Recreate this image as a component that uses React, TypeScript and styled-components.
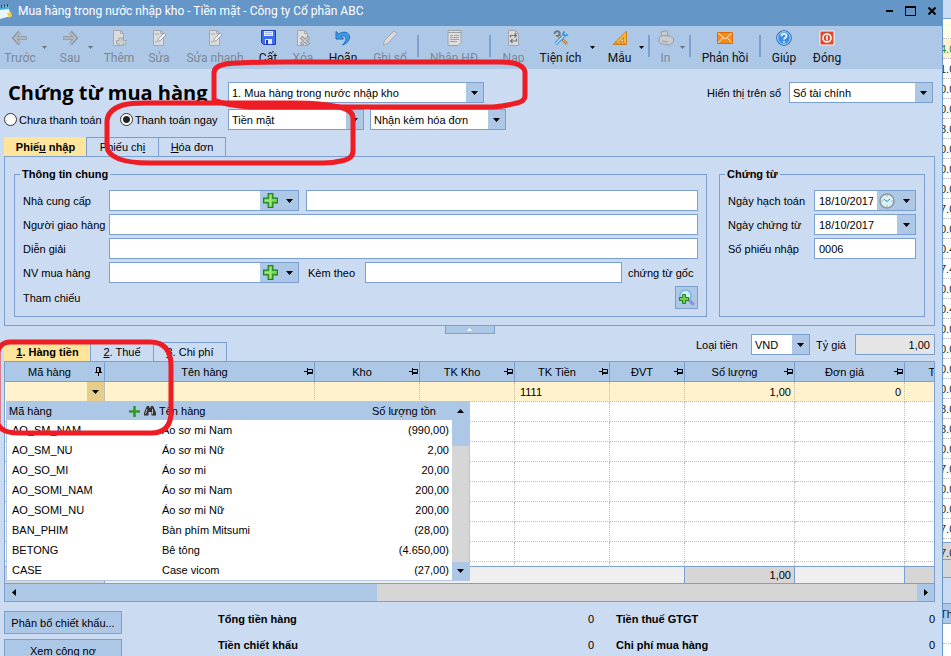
import React from "react";
import styled, { createGlobalStyle } from "styled-components";

const c = {
  title: "#6596c8",
  bar: "#adc7e7",
  body: "#cbdbf1",
  line: "#7ba0cf",
  tab: "#ffe59b",
  row: "#fff2cc",
  gray: "#d6d6d6",
  dots: "#bdbdbd",
  red: "#ee1c24",
};

const GlobalStyle = createGlobalStyle`
  *, *::before, *::after { box-sizing: border-box; }
  html, body { margin: 0; background: #fff; }
  body, button, input, select {
    font-family: "Liberation Sans", Arial, sans-serif;
    font-size: 11px;
    line-height: 14px;
    color: #000;
  }
  button { padding: 0; border: 0; background: none; cursor: pointer; }
  svg { display: block; flex: none; }
`;

const Desktop = styled.div`
  position: relative;
  display: flex;
  height: 100vh;
  overflow: hidden;
`;

const Window = styled.main`
  flex: 1;
  min-width: 0;
  background: ${c.body};
  border-right: 1px solid ${c.title};
  box-shadow: 0 0 4px #0006;
`;

/* ---------- title bar ---------- */

const TitleBar = styled.header`
  display: flex;
  align-items: center;
  height: 26px;
  padding: 0 0 5px;
  background: ${c.title};
`;

const WindowTitle = styled.span`
  flex: 1;
  margin-left: 6px;
  color: #fff;
  font: 12px/18px Roboto, sans-serif;
  white-space: nowrap;
`;

const CaptionButton = styled.button`
  display: grid;
  place-items: center;
  width: 21px;
  height: 20px;
`;

/* ---------- toolbar ---------- */

const Toolbar = styled.nav`
  display: flex;
  height: 43px;
  background: ${c.bar};
`;

const Tool = styled.button<{ $w: number }>`
  display: flex;
  flex-direction: column;
  align-items: center;
  gap: 4px;
  width: ${(p) => p.$w}px;
  padding-top: 4px;
  flex: none;
  font: 12px/16px Roboto, sans-serif;
  color: #111;
  white-space: nowrap;
  &:disabled { color: #7d8794; cursor: default; }
`;

const ToolMenu = styled.button<{ $w: number }>`
  display: flex;
  align-items: center;
  width: ${(p) => p.$w}px;
  padding-left: 2px;
  flex: none;
  color: #000;
  &:disabled { color: #6b7480; }
`;

const Separator = styled.span`
  width: 2px;
  height: 22px;
  margin: 9px 3px 0;
  flex: none;
  background: ${c.line};
`;

/* ---------- shared form parts ---------- */

const Body = styled.div`
  padding: 13px 7px 0 4px;
`;

const Box = styled.div<{ $w?: number }>`
  display: flex;
  height: 21px;
  border: 1px solid ${c.line};
  background: #fff;
  ${(p) => (p.$w ? `width: ${p.$w}px; flex: none;` : "flex: 1; min-width: 0;")}
`;

const TextInput = styled.input<{ $w?: number; $right?: boolean }>`
  height: 21px;
  padding: 0 4px;
  border: 1px solid ${c.line};
  border-radius: 0;
  outline: 0;
  background: #fff;
  text-align: ${(p) => (p.$right ? "right" : "left")};
  min-width: 0;
  ${(p) => (p.$w ? `width: ${p.$w}px; flex: none;` : "flex: 1;")}
  &:read-only { background: #e5e5e5; }
`;

const BoxInput = styled.input`
  flex: 1;
  min-width: 0;
  padding: 0 4px;
  border: 0;
  outline: 0;
  background: #fff;
`;

const BoxButton = styled.button<{ $w?: number }>`
  display: grid;
  place-items: center;
  width: ${(p) => p.$w ?? 18}px;
  flex: none;
  background: ${c.bar};
`;

const SelectFrame = styled.div<{ $w: number }>`
  display: grid;
  width: ${(p) => p.$w}px;
  height: 21px;
  flex: none;
  border: 1px solid ${c.line};
  background: #fff;
  > * { grid-area: 1 / 1; }
`;

const NativeSelect = styled.select`
  appearance: none;
  width: 100%;
  padding: 0 20px 0 3px;
  border: 0;
  border-radius: 0;
  outline: 0;
  background: transparent;
`;

const SelectArrow = styled.span`
  display: grid;
  place-items: center;
  justify-self: end;
  width: 17px;
  background: ${c.bar};
  pointer-events: none;
`;

const Heading = styled.h1`
  width: 220px;
  margin: 0;
  flex: none;
  font: bold 20px/21px "Open Sans", sans-serif;
  white-space: nowrap;
`;

const HeadRow = styled.div`
  display: flex;
  align-items: center;
  padding: 0 2px 0 4px;
`;

const PushLabel = styled.label`
  margin: 0 8px 0 auto;
  white-space: nowrap;
`;

const PayRow = styled.div`
  display: flex;
  align-items: center;
  margin-top: 6px;
`;

const RadioLabel = styled.label<{ $w: number }>`
  display: flex;
  align-items: center;
  gap: 2px;
  width: ${(p) => p.$w}px;
  flex: none;
  white-space: nowrap;
`;

const Radio = styled.input`
  appearance: none;
  width: 13px;
  height: 13px;
  margin: 0;
  border: 1px solid #333;
  border-radius: 50%;
  background: #fff;
  &:checked { background: radial-gradient(circle, #222 0 3px, #fff 4px); }
`;

const PaySelects = styled.div`
  display: flex;
  gap: 6px;
`;

/* ---------- tabs ---------- */

const Tabs = styled.div`
  display: flex;
`;

const Tab = styled.button<{ $w: number; $on?: boolean }>`
  width: ${(p) => p.$w}px;
  height: 19px;
  border: 1px solid ${(p) => (p.$on ? c.tab : c.line)};
  border-bottom: 0;
  background: ${(p) => (p.$on ? c.tab : "transparent")};
  font-weight: ${(p) => (p.$on ? "bold" : "normal")};
  white-space: nowrap;
  & + & { border-left-color: ${c.line}; }
  &:not(:last-child) { border-right: 0; }
`;

const TabRow = styled.div`
  margin-top: 7px;
`;

const Panel = styled.section`
  display: flex;
  gap: 12px;
  padding: 10px 9px 8px;
  border: 1px solid ${c.line};
`;

const Group = styled.fieldset<{ $w?: number }>`
  ${(p) => (p.$w ? `width: ${p.$w}px; flex: none;` : "flex: 1;")}
  min-width: 0;
  margin: 0;
  padding: 9px 8px 7px;
  border: 1px solid ${c.line};
`;

const Legend = styled.legend`
  margin-left: -3px;
  padding: 0 2px;
  font-weight: bold;
  line-height: 14px;
`;

const FieldRow = styled.div`
  display: flex;
  align-items: center;
  min-height: 21px;
  margin-bottom: 3px;
  &:last-child { margin-bottom: 0; }
`;

const FieldLabel = styled.label<{ $w?: number }>`
  width: ${(p) => p.$w ?? 86}px;
  flex: none;
  white-space: nowrap;
`;

const Gap = styled.span<{ $w: number }>`
  width: ${(p) => p.$w}px;
  flex: none;
`;

const LookupButton = styled.button`
  display: grid;
  place-items: center;
  width: 23px;
  height: 23px;
  margin-left: auto;
  border: 1px solid ${c.line};
  background: ${c.bar};
`;

const Collapse = styled.button`
  display: grid;
  place-items: center;
  width: 50px;
  height: 9px;
  margin: -1px auto 0;
  border: 1px solid ${c.line};
  background: ${c.bar};
`;

/* ---------- detail grid ---------- */

const DetailBar = styled.div`
  display: flex;
  align-items: flex-end;
  height: 27px;
`;

const Currency = styled.div`
  display: flex;
  align-items: center;
  align-self: flex-start;
  margin-left: auto;
`;

const CurrencyLabel = styled.label<{ $w: number }>`
  width: ${(p) => p.$w}px;
`;

const GridFrame = styled.section`
  position: relative;
  border: 1px solid ${c.line};
  background: #fff;
`;

const GridView = styled.div`
  overflow: hidden;
`;

const GridTable = styled.table`
  width: 100%;
  min-width: 1010px;
  table-layout: fixed;
  border-collapse: separate;
  border-spacing: 0;
`;

const GridHead = styled.th`
  height: 20px;
  padding: 0 1px 0 0;
  border-right: 1px solid ${c.line};
  border-bottom: 1px solid ${c.line};
  background: ${c.bar};
  font-weight: normal;
`;

const HeadFlex = styled.div`
  display: flex;
  align-items: center;
  > span { flex: 1; white-space: nowrap; }
`;

const GridCell = styled.td<{ $on?: boolean; $right?: boolean; $short?: boolean }>`
  height: ${(p) => (p.$short ? 4 : 20)}px;
  padding: ${(p) => (p.$on ? "0 3px 0 5px" : "0")};
  border-right: 1px dotted ${c.dots};
  border-bottom: ${(p) => (p.$short ? "0" : `1px dotted ${c.dots}`)};
  background: ${(p) => (p.$on ? c.row : "#fff")};
  text-align: ${(p) => (p.$right ? "right" : "left")};
`;

const EditCell = styled.td`
  height: 20px;
  padding: 0;
  border-right: 1px solid ${c.dots};
  background: ${c.row};
`;

const EditBox = styled.div`
  display: flex;
  height: 20px;
`;

const EditInput = styled.input`
  flex: 1;
  min-width: 0;
  border: 0;
  outline: 0;
  background: transparent;
`;

const EditArrow = styled.button`
  display: grid;
  place-items: center;
  width: 17px;
  background: #e5ce87;
`;

const SumCell = styled.td<{ $fill?: boolean }>`
  height: 17px;
  padding: 0 3px;
  border-top: 1px solid ${c.line};
  border-right: 1px solid ${(p) => (p.$fill ? c.line : "#efefef")};
  background: ${(p) => (p.$fill ? c.gray : "#efefef")};
  text-align: right;
  line-height: 14px;
  &:has(+ [data-total]) { border-right-color: ${c.line}; }
`;

const HScroll = styled.div`
  display: flex;
  height: 18px;
  border-top: 1px solid ${c.line};
  background: ${c.gray};
`;

const HThumb = styled.div`
  display: flex;
  width: 40%;
  margin-right: auto;
  background: ${c.bar};
`;

const HButton = styled.button`
  display: grid;
  place-items: center;
  width: 17px;
  background: ${c.bar};
`;

/* ---------- item list under the edited cell ---------- */

const Popup = styled.div`
  position: absolute;
  top: 39px;
  left: 1px;
  display: flex;
  width: 464px;
  border: 1px solid #b3c8e0;
  background: #fff;
`;

const ItemTable = styled.table`
  flex: 1;
  table-layout: fixed;
  border-collapse: collapse;
`;

const ItemHead = styled.th<{ $right?: boolean }>`
  height: 18px;
  padding: 0 16px 0 2px;
  background: ${c.bar};
  font-weight: normal;
  text-align: ${(p) => (p.$right ? "right" : "left")};
`;

const HeadTools = styled.div`
  display: flex;
  align-items: center;
  gap: 4px;
  margin-right: -15px;
  > span { flex: 1; }
`;

const ItemCell = styled.td<{ $right?: boolean }>`
  height: 20px;
  padding: 0 3px 0 5px;
  text-align: ${(p) => (p.$right ? "right" : "left")};
  white-space: nowrap;
`;

const VScroll = styled.div`
  display: flex;
  flex-direction: column;
  width: 17px;
  flex: none;
  background: ${c.gray};
`;

const VThumb = styled.div`
  height: 26px;
  background: ${c.bar};
`;

const VButton = styled.button`
  display: grid;
  place-items: center;
  height: 18px;
  background: ${c.bar};
  &:last-child { margin-top: auto; }
`;

/* ---------- totals ---------- */

const Footer = styled.footer`
  display: flex;
  gap: 96px;
`;

const Actions = styled.div`
  display: flex;
  flex-direction: column;
  gap: 5px;
  width: 118px;
  flex: none;
  padding-top: 9px;
`;

const ActionButton = styled.button`
  height: 23px;
  border: 1px solid ${c.line};
  background: ${c.bar};
  white-space: nowrap;
`;

const Totals = styled.dl`
  display: grid;
  flex: 1;
  grid-template-columns: 376fr 319fr;
  grid-auto-rows: 26px;
  column-gap: 22px;
  margin: 4px 0 0;
`;

const Total = styled.div`
  display: flex;
  align-items: center;
  justify-content: space-between;
  dt { font-weight: bold; }
  dd { margin: 0; }
`;

/* ---------- list window behind ---------- */

const Behind = styled.aside`
  width: 8px;
  flex: none;
  overflow: hidden;
  background: #fff;
`;

const BehindRow = styled.div<{ $h?: number; $bg?: string; $color?: string; $solid?: boolean }>`
  height: ${(p) => p.$h ?? 20}px;
  padding-top: 3px;
  border-bottom: 1px ${(p) => (p.$solid ? `solid ${c.line}` : `dotted ${c.dots}`)};
  background: ${(p) => p.$bg ?? "#fff"};
  color: ${(p) => p.$color ?? "#222"};
  text-indent: -3px;
  white-space: nowrap;
  overflow: hidden;
`;

/* ---------- red marks ---------- */

const Marks = styled.svg`
  position: absolute;
  top: 0;
  left: 0;
  pointer-events: none;
`;

/* ---------- glyphs ---------- */

const Down = ({ s = 7 }: { s?: number }) => (
  <svg width={s} height={s === 7 ? 4 : 3} viewBox="0 0 7 4" preserveAspectRatio="none">
    <path d="M0 0h7L3.5 4z" fill="currentColor" />
  </svg>
);
const Up = ({ fill = "#000", w = 7 }: { fill?: string; w?: number }) => (
  <svg width={w} height={w === 7 ? 4 : 3} viewBox="0 0 7 4" preserveAspectRatio="none">
    <path d="M0 4h7L3.5 0z" fill={fill} />
  </svg>
);
const Side = ({ right }: { right?: boolean }) => (
  <svg width="4" height="7" viewBox="0 0 4 7">
    <path d={right ? "M0 0v7l4-3.5z" : "M4 0v7L0 3.5z"} />
  </svg>
);
const Pin = ({ down }: { down?: boolean }) => (
  <svg width="9" height="9" viewBox="0 0 9 9" fill="none" stroke="#000">
    {down ? (
      <path d="M2.5 5V.5h3V5M6.500 .5v5M1 5.5h7M4.5 5.5V9" />
    ) : (
      <path d="M0 4.5h3M3.5 1v7M4 2.5h4.5v3H4M4 6.500h5" />
    )}
  </svg>
);
const Plus = () => (
  <svg width="15" height="15" viewBox="0 0 16 16">
    <path d="M5.5.5h5v5h5v5h-5v5h-5v-5h-5v-5h5z" fill="#62c83f" stroke="#1b8420" strokeWidth="1.300" />
    <path d="M7 2h2v5h5v1H9v6H7V9H2V7h5z" fill="#a5e57c" />
  </svg>
);
const SmallPlus = () => (
  <svg width="11" height="11" viewBox="0 0 11 11">
    <path d="M5.500 0v11M0 5.500h11" stroke="#2f9a24" strokeWidth="2.600" />
  </svg>
);
const Binoculars = () => (
  <svg width="12" height="10" viewBox="0 0 12 10" fill="#333">
    <path d="M3 0h2l.6 2h.8L7 0h2l1 2 2 5v2.500H7.500V6h-3v3.500H0V7l2-5z" />
    <path d="M3 3 1.500 8M8.500 3v5" stroke="#bbb" />
  </svg>
);
const Clock = () => (
  <svg width="16" height="16" viewBox="0 0 16 16">
    <circle cx="8" cy="8" r="7" fill="#d5f3f8" stroke="#8e979f" strokeWidth="1.6" />
    <path d="m4.5 6 3.5 2.5 3-2.5" fill="none" stroke="#4b7da8" />
    <path d="M7.5 2.5h1v1h-1zM7.5 12.5h1v1h-1zM2.5 7.5h1v1h-1zM12.5 7.5h1v1h-1z" fill="#e0433a" />
  </svg>
);
const SearchAdd = () => (
  <svg width="17" height="17" viewBox="0 0 17 17">
    <path d="m10.500 10.500 4.500 4.500" stroke="#8f8fdc" strokeWidth="3" strokeLinecap="round" />
    <circle cx="7.500" cy="6.500" r="5.500" fill="#d4effc" stroke="#7fb0dc" strokeWidth="1.500" />
    <path d="M4.500 5.500h3v3h3v3h-3v3h-3v-3h-3v-3h3z" fill="#73cf4b" stroke="#1b8420" />
  </svg>
);
const Logo = () => (
  <svg width="12" height="16" viewBox="0 0 12 16">
    <path d="M0 4 8 3l3 10-11 3z" fill="#eaf6ff" />
    <path d="m0 4 8-1 1 3-9 1z" fill="#4ab1e6" />
    <path d="m7 10 4-1 1 4-3 2z" fill="#f5cf3e" />
    <path d="M1.5 2v3M4.500 1.500v3M7.500 1v3" stroke="#3c4e66" />
  </svg>
);

const Sheet = ({ children }: { children?: React.ReactNode }) => (
  <svg width="16" height="16" viewBox="0 0 16 16" fill="none">
    <path d="M2.500 .5h7l3 3v12h-10z" fill="#dcdcdc" stroke="#a3a7ad" />
    <path d="M9.500 .5v3h3" stroke="#a3a7ad" />
    {children}
  </svg>
);

const glyphs: Record<string, React.ReactNode> = {
  back: (
    <svg width="16" height="16" viewBox="0 0 16 16" fill="none">
      <path d="M7.500 2 2 8l5.500 6M2.500 8H15" stroke="#8f959d" strokeWidth="3.600" />
      <path d="M7.500 2.500 2.500 8l5 5.500M3 8h11.500" stroke="#b9bec5" strokeWidth="1.500" />
    </svg>
  ),
  next: (
    <svg width="16" height="16" viewBox="0 0 16 16" fill="none">
      <path d="M8.500 2 14 8l-5.500 6M13.500 8H1" stroke="#8f959d" strokeWidth="3.600" />
      <path d="M8.500 2.500 13.500 8l-5 5.500M13 8H1.500" stroke="#b9bec5" strokeWidth="1.500" />
    </svg>
  ),
  add: (
    <Sheet>
      <path d="M8 8h4v2.500h3V14h-3v1.500H8V14H5.500v-3.500H8z" fill="#cfcfcf" stroke="#a3a7ad" />
    </Sheet>
  ),
  edit: (
    <Sheet>
      <path d="M4 4h4M4 12h2" stroke="#a3a7ad" />
      <path d="m6.500 11.500 1-3 5.500-5.500 2 2-5.500 5.500z" fill="#eee" stroke="#9da2a8" />
    </Sheet>
  ),
  save: (
    <svg width="15" height="16" viewBox="0 0 15 16">
      <path d="M.5.500h14v14h-12l-2-2z" fill="#3f6df0" stroke="#1f3fc4" />
      <path d="M3 1h9v5H3z" fill="#e8f0ff" />
      <path d="M4 9h7v5H4z" fill="#dfe6f4" />
      <path d="M5 10h2v4H5z" fill="#1f3fc4" />
      <path d="M4 2.500h7M4 4.500h7" stroke="#9db4ee" />
    </svg>
  ),
  remove: (
    <Sheet>
      <path d="m6 7 8 7.500m0-7.500-8 7.500" stroke="#92979d" strokeWidth="3.400" />
      <path d="m6.500 7.500 7 6.500m0-6.500-7 6.500" stroke="#d2d2d2" strokeWidth="1.200" />
    </Sheet>
  ),
  undo: (
    <svg width="16" height="16" viewBox="0 0 16 16">
      <path d="M1 1.500v7.500h7.500L6 6.500c3-1.500 5 0 5 2.500 0 2-1.500 4-3.500 6 4.500-1.500 7-4.500 7-8C14.500 2.500 9 .5 3.800 4z" fill="#3f9be6" stroke="#1c6cc0" />
    </svg>
  ),
  pen: (
    <svg width="16" height="16" viewBox="0 0 16 16">
      <path d="m1 15 1.500-4.500L12 1l3 2.500-9.500 10z" fill="#d9dbde" stroke="#a3a7ad" />
    </svg>
  ),
  invoice: (
    <svg width="15" height="16" viewBox="0 0 15 16" fill="none">
      <path d="M1 .5h13v12l-3 3H1z" fill="#dedede" stroke="#9da2a8" />
      <path d="M1 2.500h13M3 5.500h3M7 5.500h5M3 7.500h9M3 9.500h9M3 11.500h7" stroke="#9da2a8" />
    </svg>
  ),
  reload: (
    <Sheet>
      <path d="M4.500 7.500V5.500h5.500M8.500 3.500l2 2-2 2M10.500 8.500v2.500H5M6.500 9l-2 2 2 2" stroke="#6e747b" strokeWidth="1.200" />
    </Sheet>
  ),
  utility: (
    <svg width="16" height="16" viewBox="0 0 16 16" fill="none">
      <path d="m5 5 9 9" stroke="#b97d3b" strokeWidth="3" />
      <path d="m5 5 9 9" stroke="#f0c078" />
      <path d="M1.500 4c0-3 4-3.500 5-1.500S5 6.500 3 5.500" stroke="#6c7379" strokeWidth="1.800" />
      <path d="m2.500 14 8-8" stroke="#3f94d6" strokeWidth="3.400" />
      <path d="m2.500 14 8-8" stroke="#c5e6fa" strokeWidth="1.200" />
      <path d="M11.500 1.500 10 4l2 2 3-1.500" stroke="#3f94d6" strokeWidth="1.800" />
    </svg>
  ),
  template: (
    <svg width="16" height="16" viewBox="0 0 16 16">
      <path d="M14.500 1v13.500H1z" fill="#f7b73c" stroke="#d07f1c" />
      <path d="M11.500 7.500v4h-4z" fill="#e8f0fa" stroke="#d07f1c" />
      <path d="M4 12v2M6 12.500v2M9 12.500v2M12 12.500v2" stroke="#b76a10" />
    </svg>
  ),
  print: (
    <svg width="16" height="16" viewBox="0 0 16 16" fill="#c9cbce" stroke="#989da4">
      <path d="m3 2 6-1.500 1 5-6 1z" />
      <path d="M1 7.500 4 5.500l8 .5 3.500 2v4l-4 3-9-1.500-1.500-2z" />
      <path d="m4 11 6 1" />
    </svg>
  ),
  mail: (
    <svg width="16" height="16" viewBox="0 0 16 16" fill="none">
      <path d="M.5 2.500h15v11H.5z" fill="#f58a1f" stroke="#d76a0c" />
      <path d="m1 3 7 6 7-6M1 13l5-5.500M15 13l-5-5.500" stroke="#fff1d8" />
    </svg>
  ),
  help: (
    <svg width="16" height="16" viewBox="0 0 16 16" fill="none">
      <circle cx="8" cy="8" r="7.300" fill="#3c8fe4" stroke="#2166b4" />
      <circle cx="8" cy="8" r="6.300" stroke="#b8dbfa" />
      <path d="M5.500 6.200C5.500 3 10.500 3 10.500 6c0 1.800-2.500 1.800-2.500 3.500M8 11v1.600" stroke="#fff" strokeWidth="1.700" />
    </svg>
  ),
  close: (
    <svg width="16" height="16" viewBox="0 0 16 16" fill="none">
      <path d="M1 1h14v14H1z" fill="#dd4a2e" stroke="#f3f3f3" />
      <circle cx="8" cy="8" r="4" stroke="#fff" strokeWidth="1.600" />
      <path d="M8 5.500v5" stroke="#fff" strokeWidth="1.600" />
    </svg>
  ),
};

type ToolSpec = { icon?: string; label?: string; w: number; off?: boolean; menu?: boolean; sep?: boolean };
const tools: ToolSpec[] = [
  { icon: "back", label: "Trước", w: 40, off: true },
  { menu: true, w: 14, off: true },
  { icon: "next", label: "Sau", w: 32, off: true },
  { menu: true, w: 14, off: true },
  { icon: "add", label: "Thêm", w: 38, off: true },
  { icon: "edit", label: "Sửa", w: 42, off: true },
  { icon: "edit", label: "Sửa nhanh", w: 70, off: true },
  { icon: "save", label: "Cất", w: 36 },
  { icon: "remove", label: "Xóa", w: 34, off: true },
  { icon: "undo", label: "Hoãn", w: 46 },
  { icon: "pen", label: "Ghi sổ", w: 48, off: true },
  { sep: true, w: 8 },
  { icon: "invoice", label: "Nhận HĐ", w: 64, off: true },
  { sep: true, w: 8 },
  { icon: "reload", label: "Nạp", w: 39, off: true },
  { icon: "utility", label: "Tiện ích", w: 55 },
  { menu: true, w: 14 },
  { icon: "template", label: "Mẫu", w: 35 },
  { menu: true, w: 8 },
  { sep: true, w: 8 },
  { icon: "print", label: "In", w: 25, off: true },
  { menu: true, w: 8, off: true },
  { sep: true, w: 8 },
  { icon: "mail", label: "Phản hồi", w: 62 },
  { sep: true, w: 8 },
  { icon: "help", label: "Giúp", w: 40 },
  { icon: "close", label: "Đóng", w: 46 },
];

const columns = [
  { name: "Mã hàng", w: 100 },
  { name: "Tên hàng", w: 210 },
  { name: "Kho", w: 105 },
  { name: "TK Kho", w: 95 },
  { name: "TK Tiền", w: 95 },
  { name: "ĐVT", w: 75 },
  { name: "Số lượng", w: 110 },
  { name: "Đơn giá", w: 110 },
  { name: "Thành tiền", w: 110 },
];

const items = [
  ["AO_SM_NAM", "Áo sơ mi Nam", "(990,00)"],
  ["AO_SM_NU", "Áo sơ mi Nữ", "2,00"],
  ["AO_SO_MI", "Áo sơ mi", "20,00"],
  ["AO_SOMI_NAM", "Áo sơ mi Nam", "200,00"],
  ["AO_SOMI_NU", "Áo sơ mi Nữ", "200,00"],
  ["BAN_PHIM", "Bàn phím Mitsumi", "(28,00)"],
  ["BETONG", "Bê tông", "(4.650,00)"],
  ["CASE", "Case vicom", "(27,00)"],
];

const totals = ["Tổng tiền hàng", "Tiền thuế GTGT", "Tiền chiết khấu", "Chi phí mua hàng"];

const amounts = "1.0 0.0 0.0 8.0 0.0 0.0 0.0 7.0 0.0 0.4 7.4 0.0 0.4 0.0 0.0 0.0 0.0 8.0 8.0 0.0 7.0 0.0 0.0 7.0".split(" ");

function Select({ id, w, label, options }: { id: string; w: number; label?: string; options: string[] }) {
  return (
    <SelectFrame $w={w}>
      <NativeSelect id={id} aria-label={label}>
        {options.map((o) => (
          <option key={o}>{o}</option>
        ))}
      </NativeSelect>
      <SelectArrow>
        <Down />
      </SelectArrow>
    </SelectFrame>
  );
}

function LookupBox({ id }: { id: string }) {
  return (
    <Box $w={190}>
      <BoxInput id={id} />
      <BoxButton $w={20} aria-label="Thêm mới">
        <Plus />
      </BoxButton>
      <BoxButton aria-label="Mở danh sách">
        <Down />
      </BoxButton>
    </Box>
  );
}

function ItemList() {
  return (
    <Popup>
      <ItemTable>
        <colgroup>
          <col width="150" />
          <col width="150" />
          <col width="145" />
        </colgroup>
        <thead>
          <tr>
            <ItemHead>
              <HeadTools>
                <span>Mã hàng</span>
                <button aria-label="Thêm hàng">
                  <SmallPlus />
                </button>
                <button aria-label="Tìm hàng">
                  <Binoculars />
                </button>
              </HeadTools>
            </ItemHead>
            <ItemHead>Tên hàng</ItemHead>
            <ItemHead $right>Số lượng tồn</ItemHead>
          </tr>
        </thead>
        <tbody>
          {items.map(([code, name, qty]) => (
            <tr key={code}>
              <ItemCell>{code}</ItemCell>
              <ItemCell>{name}</ItemCell>
              <ItemCell $right>{qty}</ItemCell>
            </tr>
          ))}
        </tbody>
      </ItemTable>
      <VScroll>
        <VButton aria-label="Lên">
          <Up />
        </VButton>
        <VThumb />
        <VButton aria-label="Xuống">
          <Down />
        </VButton>
      </VScroll>
    </Popup>
  );
}

function Grid() {
  return (
    <GridFrame>
      <GridView>
        <GridTable>
          <colgroup>
            {columns.map((col) => (
              <col key={col.name} width={col.w} />
            ))}
          </colgroup>
          <thead>
            <tr>
              {columns.map((col, i) => (
                <GridHead key={col.name}>
                  <HeadFlex>
                    <span>{col.name}</span>
                    <Pin down={i === 0} />
                  </HeadFlex>
                </GridHead>
              ))}
            </tr>
          </thead>
          <tbody>
            <tr>
              <EditCell>
                <EditBox>
                  <EditInput aria-label="Mã hàng" />
                  <EditArrow aria-label="Chọn mã hàng">
                    <Down />
                  </EditArrow>
                </EditBox>
              </EditCell>
              <GridCell $on />
              <GridCell $on />
              <GridCell $on />
              <GridCell $on>1111</GridCell>
              <GridCell $on />
              <GridCell $on $right>1,00</GridCell>
              <GridCell $on $right>0</GridCell>
              <GridCell $on />
            </tr>
            {Array.from({ length: 9 }, (_, r) => (
              <tr key={r}>
                {columns.map((col) => (
                  <GridCell key={col.name} $short={r === 8} />
                ))}
              </tr>
            ))}
          </tbody>
          <tfoot>
            <tr>
              <SumCell $fill />
              <SumCell />
              <SumCell />
              <SumCell />
              <SumCell />
              <SumCell />
              <SumCell $fill data-total>1,00</SumCell>
              <SumCell />
              <SumCell $fill data-total />
            </tr>
          </tfoot>
        </GridTable>
      </GridView>
      <HScroll>
        <HThumb>
          <HButton aria-label="Sang trái">
            <Side />
          </HButton>
        </HThumb>
        <HButton aria-label="Sang phải">
          <Side right />
        </HButton>
      </HScroll>
      <ItemList />
    </GridFrame>
  );
}

export default function App() {
  return (
    <Desktop>
      <GlobalStyle />
      <Window>
        <TitleBar>
          <Logo />
          <WindowTitle>Mua hàng trong nước nhập kho - Tiền mặt - Công ty Cổ phần ABC</WindowTitle>
          <CaptionButton aria-label="Thu nhỏ">
            <svg width="7" height="2"><path d="M0 0h7v2H0z" /></svg>
          </CaptionButton>
          <CaptionButton aria-label="Phóng to">
            <svg width="11" height="10" fill="none" stroke="#000"><path d="M.5 1.500h10v8H.5zM0 .5h11M0 1.500h11" /></svg>
          </CaptionButton>
          <CaptionButton aria-label="Đóng cửa sổ">
            <svg width="8" height="8" stroke="#000" strokeWidth="2"><path d="m.5.500 7 7m0-7-7 7" /></svg>
          </CaptionButton>
        </TitleBar>

        <Toolbar>
          {tools.map((t, i) =>
            t.sep ? (
              <Separator key={i} />
            ) : t.menu ? (
              <ToolMenu key={i} $w={t.w} disabled={t.off} aria-label="Thêm lựa chọn">
                <Down s={5} />
              </ToolMenu>
            ) : (
              <Tool key={i} $w={t.w} disabled={t.off}>
                {glyphs[t.icon!]}
                {t.label}
              </Tool>
            )
          )}
        </Toolbar>

        <Body>
          <HeadRow>
            <Heading>Chứng từ mua hàng</Heading>
            <Select id="kind" w={256} label="Loại chứng từ" options={["1. Mua hàng trong nước nhập kho"]} />
            <PushLabel htmlFor="book">Hiển thị trên sổ</PushLabel>
            <Select id="book" w={144} options={["Sổ tài chính"]} />
          </HeadRow>
          <PayRow>
            <RadioLabel $w={116}>
              <Radio type="radio" name="pay" />
              Chưa thanh toán
            </RadioLabel>
            <RadioLabel $w={108}>
              <Radio type="radio" name="pay" defaultChecked />
              Thanh toán ngay
            </RadioLabel>
            <PaySelects>
              <Select id="method" w={136} label="Hình thức" options={["Tiền mặt"]} />
              <Select id="bill" w={136} label="Hóa đơn" options={["Nhận kèm hóa đơn"]} />
            </PaySelects>
          </PayRow>

          <TabRow>
            <Tabs role="tablist">
              <Tab role="tab" aria-selected $w={82} $on>Phiế<u>u</u> nhập</Tab>
              <Tab role="tab" $w={72}>Phiếu ch<u>i</u></Tab>
              <Tab role="tab" $w={68}><u>H</u>óa đơn</Tab>
            </Tabs>
          </TabRow>
          <Panel>
            <Group>
              <Legend>Thông tin chung</Legend>
              <FieldRow>
                <FieldLabel htmlFor="supplier">Nhà cung cấp</FieldLabel>
                <LookupBox id="supplier" />
                <Gap $w={7} />
                <TextInput aria-label="Tên nhà cung cấp" />
              </FieldRow>
              <FieldRow>
                <FieldLabel htmlFor="carrier">Người giao hàng</FieldLabel>
                <TextInput id="carrier" />
              </FieldRow>
              <FieldRow>
                <FieldLabel htmlFor="note">Diễn giải</FieldLabel>
                <TextInput id="note" />
              </FieldRow>
              <FieldRow>
                <FieldLabel htmlFor="buyer">NV mua hàng</FieldLabel>
                <LookupBox id="buyer" />
                <Gap $w={9} />
                <FieldLabel $w={57} htmlFor="attached">Kèm theo</FieldLabel>
                <TextInput id="attached" />
                <Gap $w={6} />
                <FieldLabel as="span" $w={70}>chứng từ gốc</FieldLabel>
              </FieldRow>
              <FieldRow>
                <span>Tham chiếu</span>
                <LookupButton aria-label="Chọn tham chiếu">
                  <SearchAdd />
                </LookupButton>
              </FieldRow>
            </Group>
            <Group $w={206}>
              <Legend>Chứng từ</Legend>
              <FieldRow>
                <FieldLabel htmlFor="posted">Ngày hạch toán</FieldLabel>
                <Box>
                  <BoxInput id="posted" defaultValue="18/10/2017" />
                  <BoxButton $w={20} aria-label="Chọn giờ">
                    <Clock />
                  </BoxButton>
                  <BoxButton aria-label="Chọn ngày">
                    <Down />
                  </BoxButton>
                </Box>
              </FieldRow>
              <FieldRow>
                <FieldLabel htmlFor="dated">Ngày chứng từ</FieldLabel>
                <Box>
                  <BoxInput id="dated" defaultValue="18/10/2017" />
                  <BoxButton aria-label="Chọn ngày">
                    <Down />
                  </BoxButton>
                </Box>
              </FieldRow>
              <FieldRow>
                <FieldLabel htmlFor="number">Số phiếu nhập</FieldLabel>
                <TextInput id="number" defaultValue="0006" />
              </FieldRow>
            </Group>
          </Panel>
          <Collapse aria-label="Thu gọn">
            <Up fill="#fff" w={5} />
          </Collapse>

          <DetailBar>
            <Tabs role="tablist">
              <Tab role="tab" aria-selected $w={86} $on><u>1</u>. Hàng tiền</Tab>
              <Tab role="tab" $w={63}><u>2</u>. Thuế</Tab>
              <Tab role="tab" $w={74}><u>3</u>. Chi phí</Tab>
            </Tabs>
            <Currency>
              <CurrencyLabel $w={55} htmlFor="currency">Loại tiền</CurrencyLabel>
              <Select id="currency" w={59} options={["VND"]} />
              <Gap $w={6} />
              <CurrencyLabel $w={39} htmlFor="rate">Tỷ giá</CurrencyLabel>
              <TextInput id="rate" $w={80} $right readOnly value="1,00" />
            </Currency>
          </DetailBar>
          <Grid />

          <Footer>
            <Actions>
              <ActionButton>Phân bổ chiết khấu...</ActionButton>
              <ActionButton>Xem công nợ</ActionButton>
            </Actions>
            <Totals>
              {totals.map((name) => (
                <Total key={name}>
                  <dt>{name}</dt>
                  <dd>0</dd>
                </Total>
              ))}
            </Totals>
          </Footer>
        </Body>
      </Window>

      <Behind aria-hidden>
        <BehindRow $h={19} $bg={c.body} $solid />
        <BehindRow $bg="#ffffe1" />
        <BehindRow $bg={c.row} $color="#1c8a2c">4.0</BehindRow>
        {amounts.map((a, i) => (
          <BehindRow key={i}>{a}</BehindRow>
        ))}
        <BehindRow $h={2} $solid />
        <BehindRow $h={17} $bg={c.gray} $solid>7.0</BehindRow>
        <BehindRow $h={18} $bg={c.gray} $solid />
        <BehindRow $h={26} $bg={c.body} $solid />
        <BehindRow $bg={c.bar} $solid>Th</BehindRow>
        <BehindRow />
        <BehindRow />
      </Behind>

      <Marks width="540" height="450" viewBox="0 0 540 450" fill="none" stroke={c.red} strokeWidth="5" strokeLinejoin="round">
        <path d="M214 100V73q0-7 12-9 20-2 60-2h215q22 0 24 10v24q0 5-8 7-12 3-24 4H250q-22-1-36-7z" />
        <path d="M107 146v-24q0-12 16-17 8-2 22-2h150q26 0 44 4 14 3 14 11v33q0 8-12 10-8 2-18 2H150q-20 0-31-4-12-5-12-13z" />
        <path d="M-2 351q3-9 12-9h140q21 0 21 24v46q0 21-20 21H22q-20 1-24-9z" />
      </Marks>
    </Desktop>
  );
}
